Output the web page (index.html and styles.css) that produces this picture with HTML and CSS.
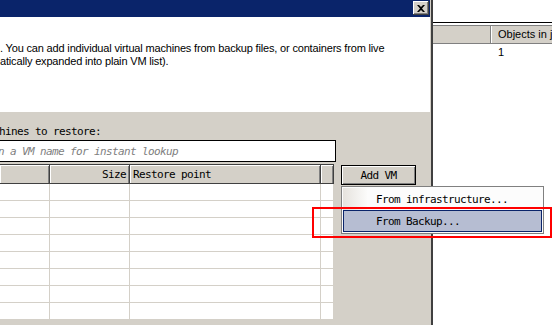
FILE: index.html
```html
<!DOCTYPE html>
<html lang="en">
<head>
    <meta charset="UTF-8">
    <meta name="viewport" content="width=device-width, initial-scale=1.0">
    <title>Restore Wizard</title>
    <link rel="stylesheet" href="styles.css">
</head>
<body>
    <div class="screen">
        <div class="dialog">
            <div class="titlebar">
                <button class="close" aria-label="Close">
                    <svg width="8" height="7" viewBox="0 0 8 7"><path d="M0 0h2l2 2 2-2h2L5 3.5 8 7H6L4 5 2 7H0l3-3.5z" fill="#000"/></svg>
                </button>
            </div>

            <div class="intro">
                <p>. You can add individual virtual machines from backup files, or containers from live</p>
                <p>atically expanded into plain VM list).</p>
            </div>

            <div class="main">
                <div class="picker">
                    <label class="caption" for="lookup">Virtual machines to restore:</label>
                    <input type="text" id="lookup" class="lookup" placeholder="Type in a VM name for instant lookup">

                    <div class="table">
                        <div class="thead">
                            <div class="th col-name">Name</div>
                            <div class="th col-size">Size</div>
                            <div class="th col-point">Restore point</div>
                            <div class="th col-end"></div>
                        </div>
                        <div class="tbody" id="rows"></div>
                    </div>
                </div>

                <div class="actions">
                    <button class="btn">Add VM</button>
                </div>
            </div>
        </div>

        <div class="side">
            <div class="grid">
                <div class="grid-head">
                    <div class="gh gh-first"></div>
                    <div class="gh">Objects in job</div>
                </div>
                <div class="grid-row">
                    <div class="gc gc-first"></div>
                    <div class="gc">1</div>
                </div>
            </div>
        </div>

        <div class="menu">
            <div class="menu-item">
                <span class="menu-icon"></span>
                <span class="menu-label">From infrastructure...</span>
            </div>
            <div class="menu-item active">
                <span class="menu-icon"></span>
                <span class="menu-label">From Backup...</span>
            </div>
        </div>

        <div class="callout"></div>
    </div>

    <script>
        const rows = document.getElementById('rows');
        for (let i = 0; i < 8; i++) {
            rows.innerHTML += '<div class="tr"><div class="td col-name"></div><div class="td col-size"></div><div class="td col-point"></div><div class="td col-end"></div></div>';
        }
    </script>
</body>
</html>
```

FILE: styles.css
```css
body {
    margin: 0;
    font-family: 'Liberation Sans', Arial, sans-serif;
    font-size: 11px;
    color: #000;
    background: #fff;
    overflow: hidden;
}

.screen {
    position: relative;
    display: flex;
    width: 552px;
    height: 325px;
    overflow: hidden;
}

/* wizard window, its left part is off screen */
.dialog {
    width: 430px;
    height: 325px;
    flex-shrink: 0;
    display: flex;
    flex-direction: column;
    background: #d4d0c8;
    padding-right: 1px;
    border-right: 2px solid #404040;
    overflow: hidden;
}

.titlebar {
    height: 17px;
    background: #0a246a;
    display: flex;
    justify-content: flex-end;
    align-items: flex-start;
    padding: 1px 1px 0 0;
    box-sizing: border-box;
}

.close {
    width: 16px;
    height: 14px;
    padding: 0;
    border: none;
    background: #d4d0c8;
    box-shadow: inset -1px -1px #404040, inset 1px 1px #fff, inset -2px -2px #808080;
    display: flex;
    align-items: center;
    justify-content: center;
}

.intro {
    height: 95px;
    background: #fff;
    padding-top: 25px;
    box-sizing: border-box;
    white-space: nowrap;
    letter-spacing: -0.17px;
}

.intro p {
    margin: 0;
    line-height: 13px;
}

.main {
    flex: 1;
    display: flex;
    font-family: 'DejaVu Sans Mono', 'Liberation Mono', monospace;
    font-size: 11px;
    letter-spacing: -0.62px;
}

.picker {
    width: 336px;
    padding-top: 13px;
    display: flex;
    flex-direction: column;
}

.caption {
    display: block;
    height: 12px;
    line-height: 13px;
    margin: 0 0 3px -67px;
    white-space: nowrap;
}

.lookup {
    width: 386px;
    height: 22px;
    margin: 0 0 0 -50px;
    padding: 0 0 0 11px;
    box-sizing: border-box;
    border: 1px solid #000;
    background: #fff;
    font-family: inherit;
    font-size: 11px;
    letter-spacing: -0.62px;
    outline: none;
}

.lookup::placeholder {
    color: #808080;
    font-style: italic;
}

.table {
    margin-top: 2px;
    width: 334px;
    background: #fff;
    border-top: 1px solid #404040;
}

.thead {
    display: flex;
    height: 19px;
    background: #d4d0c8;
    border-bottom: 1px solid #404040;
    box-sizing: border-box;
}

.th {
    box-sizing: border-box;
    line-height: 19px;
    padding: 0 3px;
    border-right: 1px solid #404040;
    box-shadow: inset 1px 1px #fff, inset -1px 0 #808080;
    white-space: nowrap;
    overflow: hidden;
}

.col-name { width: 50px; }
.col-size { width: 80px; text-align: right; }
.col-point { width: 191px; }
.col-end { width: 13px; }

.th.col-name { color: transparent; }

.tr {
    display: flex;
    height: 17px;
    border-bottom: 1px solid #d4d0c8;
    box-sizing: border-box;
}

.td {
    box-sizing: border-box;
    border-right: 1px solid #d4d0c8;
}

.actions {
    padding: 53px 0 0 5px;
}

.btn {
    width: 75px;
    height: 20px;
    padding: 0;
    border: 1px solid #000;
    background: #d4d0c8;
    box-shadow: inset 1px 1px #fff, inset -1px -1px #808080;
    font-family: inherit;
    font-size: 11px;
    letter-spacing: -0.62px;
    color: #000;
}

/* list on the right behind the wizard */
.side {
    flex: 1;
    background: #fff;
    padding-top: 22px;
}

.grid {
    border-top: 1px solid #000;
}

.grid-head {
    display: flex;
    margin-top: 2px;
    height: 19px;
    background: #d4d0c8;
    border-top: 1px solid #808080;
    border-bottom: 1px solid #808080;
    box-sizing: border-box;
}

.gh {
    flex: 1;
    line-height: 17px;
    padding-left: 7px;
    white-space: nowrap;
    box-shadow: inset 1px 0 #fff;
}

.gh-first {
    flex: none;
    width: 57px;
    padding: 0;
    border-right: 1px solid #808080;
    box-shadow: none;
}

.grid-row {
    display: flex;
    line-height: 17px;
}

.gc {
    flex: 1;
    padding-left: 7px;
}

.gc-first {
    flex: none;
    width: 58px;
    padding: 0;
}

/* popup menu of Add VM */
.menu {
    position: absolute;
    left: 341px;
    top: 186px;
    width: 203px;
    padding: 1px;
    box-sizing: border-box;
    background: #fcfcfc;
    border: 1px solid #808080;
    font-family: 'DejaVu Sans Mono', 'Liberation Mono', monospace;
    font-size: 11px;
    letter-spacing: -0.62px;
}

.menu-item {
    display: flex;
    align-items: center;
    height: 22px;
    box-sizing: border-box;
}

.menu-icon {
    width: 24px;
    height: 100%;
    background: linear-gradient(to right, #e6e3de, #fbfbfa);
}

.menu-label {
    padding-left: 9px;
}

.menu-item.active {
    background: #b6bdd2;
    border: 1px solid #0a246a;
}

.menu-item.active .menu-icon {
    background: none;
    width: 23px;
}

.callout {
    position: absolute;
    left: 312px;
    top: 207px;
    width: 240px;
    height: 31px;
    border: 2px solid #ff0000;
    box-sizing: border-box;
}
```
